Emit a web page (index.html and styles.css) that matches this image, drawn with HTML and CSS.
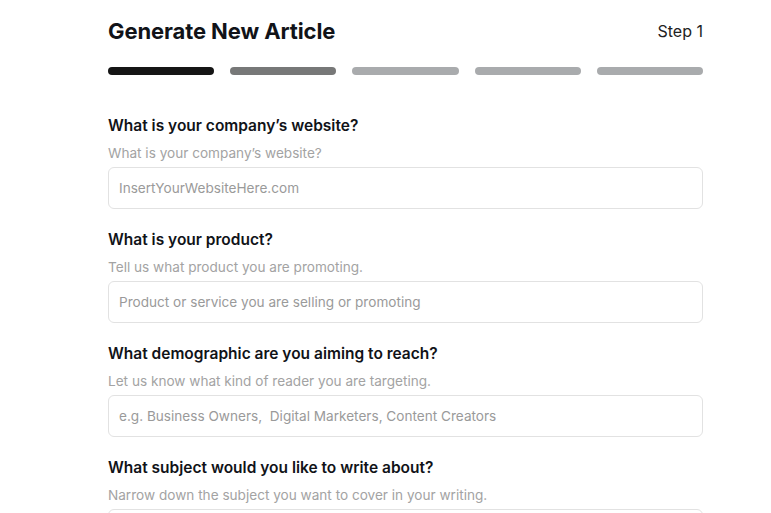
FILE: index.html
```html
<!DOCTYPE html>
<html lang="en">
<head>
<meta charset="utf-8">
<title>Generate New Article</title>
<link rel="stylesheet" href="styles.css">
</head>
<body>
<main class="page">
  <header class="head">
    <h1 class="title">Generate New Article</h1>
    <span class="step">Step 1</span>
  </header>
  <div class="progress">
    <span class="bar bar-active"></span>
    <span class="bar bar-next"></span>
    <span class="bar"></span>
    <span class="bar"></span>
    <span class="bar"></span>
  </div>
  <form class="form">
    <div class="field">
      <label class="label" for="site">What is your company’s website?</label>
      <p class="hint">What is your company’s website?</p>
      <input class="input" id="site" type="text" placeholder="InsertYourWebsiteHere.com">
    </div>
    <div class="field">
      <label class="label" for="product">What is your product?</label>
      <p class="hint">Tell us what product you are promoting.</p>
      <input class="input" id="product" type="text" placeholder="Product or service you are selling or promoting">
    </div>
    <div class="field">
      <label class="label" for="demo">What demographic are you aiming to reach?</label>
      <p class="hint">Let us know what kind of reader you are targeting.</p>
      <input class="input" id="demo" type="text" placeholder="e.g. Business Owners,  Digital Marketers, Content Creators">
    </div>
    <div class="field">
      <label class="label" for="subject">What subject would you like to write about?</label>
      <p class="hint">Narrow down the subject you want to cover in your writing.</p>
      <input class="input" id="subject" type="text">
    </div>
  </form>
</main>
</body>
</html>
```
FILE: styles.css
```css
* { box-sizing: border-box; }
html, body { margin: 0; padding: 0; background: #fff; }
body {
  font-family: "Inter", "Liberation Sans", sans-serif;
  color: #111318;
  overflow: hidden;
}
.page {
  width: 595px;
  margin-left: 108px;
  padding-top: 16px;
  display: flex;
  flex-direction: column;
}
.head {
  display: flex;
  justify-content: space-between;
  align-items: center;
  height: 30px;
}
.title {
  margin: 0;
  font-size: 22px;
  font-weight: 700;
  line-height: 30px;
  letter-spacing: -0.1px;
}
.step {
  font-size: 16px;
  font-weight: 400;
  line-height: 30px;
  color: #222;
}
.progress {
  margin-top: 21px;
  display: flex;
  gap: 16px;
}
.bar {
  flex: 1;
  height: 8px;
  border-radius: 4px;
  background: #a9abad;
}
.bar-active { background: #151515; }
.bar-next { background: #777878; }
.form {
  margin-top: 41px;
  display: flex;
  flex-direction: column;
  gap: 21px;
}
.field {
  display: flex;
  flex-direction: column;
}
.label {
  font-size: 15.5px;
  font-weight: 600;
  line-height: 20px;
  color: #111318;
}
.hint {
  margin: 8px 0 0;
  font-size: 13.6px;
  line-height: 18px;
  color: #a3a3a3;
}
.input {
  margin-top: 5px;
  height: 42px;
  width: 100%;
  border: 1px solid #e2e2e2;
  border-radius: 6px;
  padding: 0 10px;
  font-family: inherit;
  font-size: 13.6px;
  color: #333;
  background: #fff;
  outline: none;
}
.input::placeholder { color: #9a9a9a; }
```
